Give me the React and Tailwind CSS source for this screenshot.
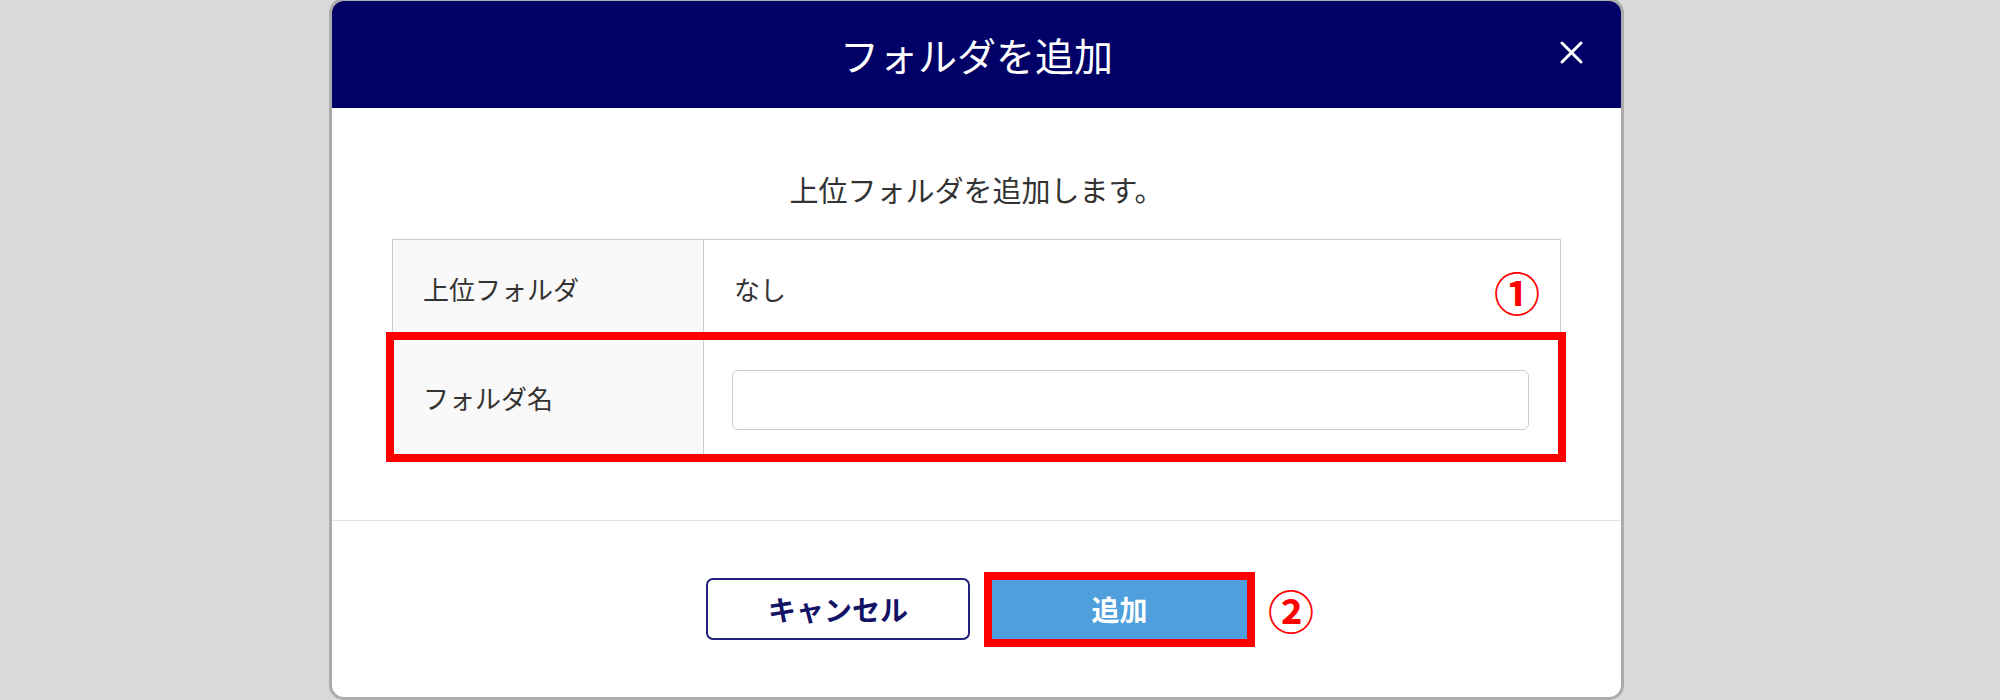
import React from 'react';

export default function App() {
  return (
    <div className="w-full h-[700px] bg-[#d9d9d9] pl-[332px] pt-[1px] font-['Noto_Sans_CJK_JP',sans-serif] text-[#333]">
      <div className="w-[1289px] h-[696px] bg-white rounded-[12px] overflow-hidden shadow-[0_0_0_3px_#acacac] flex flex-col">
        {/* header */}
        <div className="h-[107px] shrink-0 bg-[#000066] relative flex items-center justify-center">
          <h1 className="text-white text-[39px] font-normal leading-none">フォルダを追加</h1>
          <button className="absolute right-[38px] top-[40px] w-[23px] h-[23px]">
            <svg viewBox="0 0 23 23" className="w-full h-full" stroke="#fff" strokeWidth="3" strokeLinecap="round">
              <line x1="2" y1="2" x2="21" y2="21" />
              <line x1="21" y1="2" x2="2" y2="21" />
            </svg>
          </button>
        </div>

        {/* body */}
        <div className="h-[412px] shrink-0 pt-[61px] px-[60px]">
          <p className="text-center text-[29px] leading-[40px]">上位フォルダを追加します。</p>
          <div className="relative mt-[30px]">
            <div className="border border-[#ccc]">
              <div className="grid grid-cols-[311px_1fr] h-[94px] border-b border-[#ccc]">
                <div className="bg-[#f9f9f9] border-r border-[#ccc] pl-[30px] pt-[4px] flex items-center text-[26px]">上位フォルダ</div>
                <div className="pl-[30px] pt-[4px] flex items-center text-[26px]">なし</div>
              </div>
              <div className="grid grid-cols-[311px_1fr] h-[120px]">
                <div className="bg-[#f9f9f9] border-r border-[#ccc] pl-[30px] pt-[6px] flex items-center text-[26px]">フォルダ名</div>
                <div className="pl-[28px] pr-[31px] pt-[12px] flex items-center">
                  <input type="text" className="w-full h-[60px] border border-[#ccc] rounded-[6px] bg-white px-3 text-[24px] outline-none" />
                </div>
              </div>
            </div>
            {/* annotation ① */}
            <div className="absolute left-[-6px] top-[93px] w-[1180px] h-[130px] border-[8px] border-[#ff0000]"></div>
            <span className="absolute left-[1102px] top-[29px] text-[46px] leading-none font-bold text-[#ff0000]">①</span>
          </div>
        </div>

        {/* footer */}
        <div className="flex-1 border-t border-[#e3e3e3] flex items-center justify-center gap-[22px]">
          <button className="w-[264px] h-[62px] rounded-[7px] border-2 border-[#22227a] text-[#131366] text-[28px] font-bold">キャンセル</button>
          <div className="relative">
            <button className="w-[255px] h-[59px] bg-[#509fdd] text-white text-[28px] font-bold outline-8 outline-[#ff0000] block">追加</button>
            <span className="absolute left-[276px] top-1/2 -translate-y-1/2 text-[46px] leading-none font-bold text-[#ff0000]">②</span>
          </div>
        </div>
      </div>
    </div>
  );
}
